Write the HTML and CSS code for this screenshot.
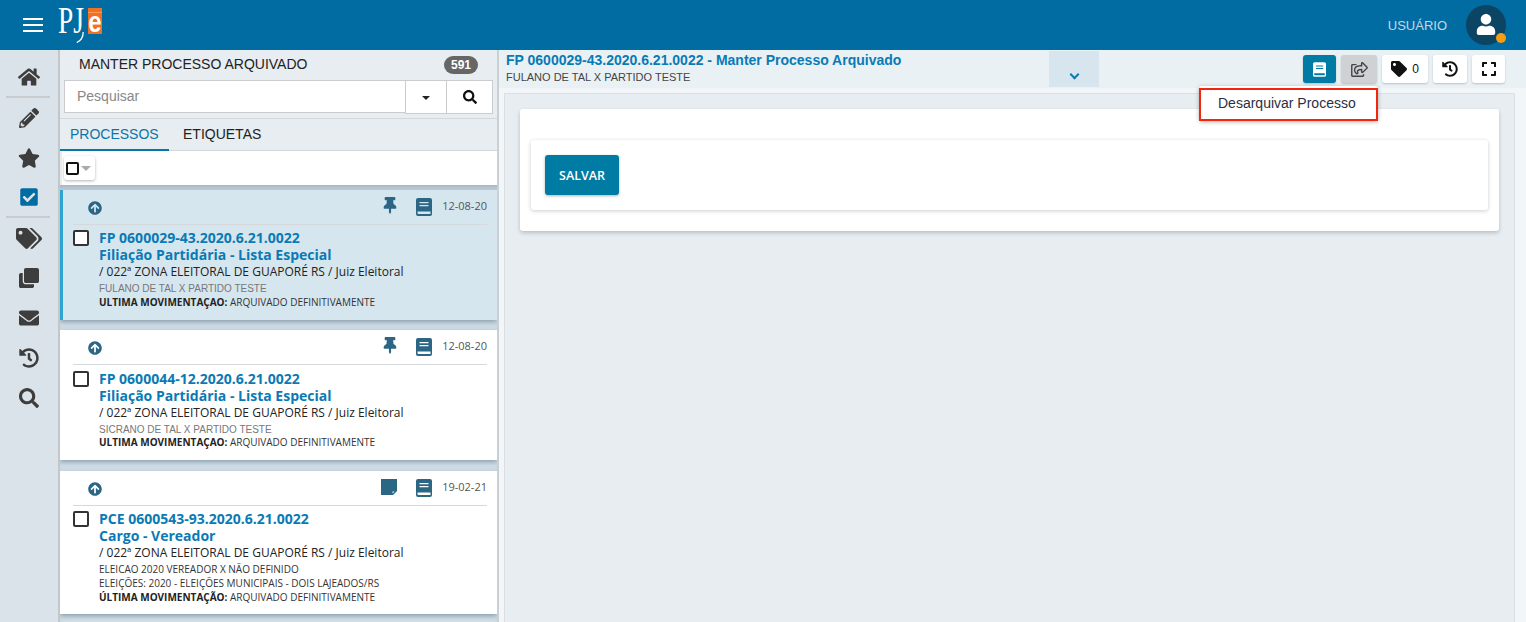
FILE: index.html
```html
<!DOCTYPE html>
<html lang="pt-BR">
<head>
    <meta charset="UTF-8">
    <title>PJe - Manter Processo Arquivado</title>
    <link rel="stylesheet" href="styles.css">
</head>
<body>
    <!-- Icon sprite -->
    <svg class="sprite" xmlns="http://www.w3.org/2000/svg">
        <symbol id="i-home" viewBox="0 0 576 512"><path d="M280.37 148.26L96 300.11V464a16 16 0 0 0 16 16l112.06-.29a16 16 0 0 0 15.92-16V368a16 16 0 0 1 16-16h64a16 16 0 0 1 16 16v95.64a16 16 0 0 0 16 16.05L464 480a16 16 0 0 0 16-16V300L295.67 148.26a12.19 12.19 0 0 0-15.3 0zM571.6 251.47L488 182.56V44.05a12 12 0 0 0-12-12h-56a12 12 0 0 0-12 12v72.61L318.47 43a48 48 0 0 0-61 0L4.34 251.47a12 12 0 0 0-1.6 16.9l25.5 31A12 12 0 0 0 45.15 301l235.22-193.74a12.19 12.19 0 0 1 15.3 0L530.9 301a12 12 0 0 0 16.9-1.6l25.5-31a12 12 0 0 0-1.7-16.93z"/></symbol>
        <symbol id="i-pencil" viewBox="0 0 512 512"><path d="M497.9 142.1l-46.1 46.1c-4.7 4.7-12.3 4.7-17 0l-111-111c-4.7-4.7-4.7-12.3 0-17l46.1-46.1c18.7-18.7 49.1-18.7 67.9 0l60.1 60.1c18.8 18.7 18.8 49.1 0 67.9zM284.2 99.8L21.6 362.4.4 483.9c-2.9 16.4 11.4 30.6 27.8 27.8l121.5-21.3 262.6-262.6c4.7-4.7 4.7-12.3 0-17l-111-111c-4.8-4.7-12.4-4.7-17.1 0zM124.1 339.9c-5.5-5.5-5.5-14.3 0-19.8l154-154c5.5-5.5 14.3-5.5 19.8 0s5.5 14.3 0 19.8l-154 154c-5.5 5.5-14.3 5.5-19.8 0zM88 424h48v36.3l-64.5 11.3-31.1-31.1L51.7 376H88v48z"/></symbol>
        <symbol id="i-star" viewBox="0 0 576 512"><path d="M259.3 17.8L194 150.2 47.9 171.5c-26.2 3.8-36.7 36.1-17.7 54.6l105.7 103-25 145.5c-4.5 26.3 23.2 46 46.4 33.7L288 439.6l130.7 68.7c23.2 12.2 50.9-7.4 46.4-33.7l-25-145.5 105.7-103c19-18.5 8.5-50.8-17.7-54.6L382 150.2 316.7 17.8c-11.7-23.6-45.6-23.9-57.4 0z"/></symbol>
        <symbol id="i-check" viewBox="0 0 448 512"><path d="M400 480H48c-26.51 0-48-21.49-48-48V80c0-26.51 21.49-48 48-48h352c26.51 0 48 21.49 48 48v352c0 26.51-21.49 48-48 48zm-204.686-98.059l184-184c6.248-6.248 6.248-16.379 0-22.627l-22.627-22.627c-6.248-6.248-16.379-6.249-22.628 0L184 302.745l-70.059-70.059c-6.248-6.248-16.379-6.248-22.628 0l-22.627 22.627c-6.248 6.248-6.248 16.379 0 22.627l104 104c6.249 6.25 16.379 6.25 22.628.001z"/></symbol>
        <symbol id="i-tags" viewBox="0 0 640 512"><path d="M497.941 225.941L286.059 14.059A48 48 0 0 0 252.118 0H48C21.49 0 0 21.49 0 48v204.118a48 48 0 0 0 14.059 33.941l211.882 211.882c18.744 18.745 49.136 18.746 67.882 0l204.118-204.118c18.745-18.745 18.745-49.137 0-67.882zM112 160c-26.51 0-48-21.49-48-48s21.49-48 48-48 48 21.49 48 48-21.49 48-48 48zm513.941 133.823L421.823 497.941c-18.745 18.745-49.137 18.745-67.882 0l-.36-.36L527.64 323.522c16.999-16.999 26.36-39.6 26.36-63.64s-9.362-46.641-26.36-63.64L331.397 0h48.721a48 48 0 0 1 33.941 14.059l211.882 211.882c18.745 18.745 18.745 49.137 0 67.882z"/></symbol>
        <symbol id="i-tag" viewBox="0 0 512 512"><path d="M497.941 225.941L286.059 14.059A48 48 0 0 0 252.118 0H48C21.49 0 0 21.49 0 48v204.118a48 48 0 0 0 14.059 33.941l211.882 211.882c18.744 18.745 49.136 18.746 67.882 0l204.118-204.118c18.745-18.745 18.745-49.137 0-67.882zM112 160c-26.51 0-48-21.49-48-48s21.49-48 48-48 48 21.49 48 48-21.49 48-48 48z"/></symbol>
        <symbol id="i-clone" viewBox="0 0 512 512"><path d="M464 0c26.51 0 48 21.49 48 48v288c0 26.51-21.49 48-48 48H176c-26.51 0-48-21.49-48-48V48c0-26.51 21.49-48 48-48h288M176 416c-44.112 0-80-35.888-80-80V128H48c-26.51 0-48 21.49-48 48v288c0 26.51 21.49 48 48 48h288c26.51 0 48-21.49 48-48v-48H176z"/></symbol>
        <symbol id="i-mail" viewBox="0 0 512 512"><path d="M502.3 190.8c3.9-3.1 9.7-.2 9.7 4.7V400c0 26.5-21.5 48-48 48H48c-26.5 0-48-21.5-48-48V195.6c0-5 5.7-7.8 9.7-4.7 22.4 17.4 52.1 39.5 154.1 113.6 21.1 15.4 56.7 47.8 92.2 47.6 35.7.3 72-32.8 92.3-47.6 102-74.1 131.6-96.3 154-113.7zM256 320c23.2.4 56.6-29.2 73.4-41.4 132.7-96.3 142.8-104.7 173.4-128.7 5.8-4.5 9.2-11.5 9.2-18.9v-19c0-26.5-21.5-48-48-48H48C21.5 64 0 85.5 0 112v19c0 7.4 3.4 14.3 9.2 18.9 30.6 23.9 40.7 32.4 173.4 128.7 16.8 12.2 50.2 41.8 73.4 41.4z"/></symbol>
        <symbol id="i-history" viewBox="0 0 512 512"><path d="M504 255.531c.253 136.64-111.18 248.372-247.82 248.468-59.015.042-113.223-20.53-155.822-54.911-11.077-8.94-11.905-25.541-1.839-35.607l11.267-11.267c8.609-8.609 22.353-9.551 31.891-1.984C173.062 425.135 212.781 440 256 440c101.705 0 184-82.311 184-184 0-101.705-82.311-184-184-184-48.814 0-93.149 18.969-126.068 49.932l50.754 50.754c10.08 10.08 2.941 27.314-11.313 27.314H24c-8.837 0-16-7.163-16-16V38.627c0-14.254 17.234-21.393 27.314-11.314l49.372 49.372C129.209 34.136 189.552 8 256 8c136.81 0 247.747 110.78 248 247.531zm-180.912 78.784l9.823-12.63c8.138-10.463 6.253-25.542-4.21-33.679L288 256.349V152c0-13.255-10.745-24-24-24h-16c-13.255 0-24 10.745-24 24v135.651l65.409 50.874c10.463 8.137 25.541 6.253 33.679-4.21z"/></symbol>
        <symbol id="i-search" viewBox="0 0 512 512"><path d="M505 442.7L405.3 343c-4.5-4.5-10.6-7-17-7H372c27.6-35.3 44-79.7 44-128C416 93.1 322.9 0 208 0S0 93.1 0 208s93.1 208 208 208c48.3 0 92.7-16.4 128-44v16.3c0 6.4 2.5 12.5 7 17l99.7 99.7c9.4 9.4 24.6 9.4 33.9 0l28.3-28.3c9.4-9.4 9.4-24.6.1-34zM208 336c-70.7 0-128-57.2-128-128 0-70.7 57.2-128 128-128 70.7 0 128 57.2 128 128 0 70.7-57.2 128-128 128z"/></symbol>
        <symbol id="i-pin" viewBox="0 0 384 512"><path d="M298.028 214.267L285.793 96H328c13.255 0 24-10.745 24-24V24c0-13.255-10.745-24-24-24H56C42.745 0 32 10.745 32 24v48c0 13.255 10.745 24 24 24h42.207L85.972 214.267C37.465 236.82 0 277.261 0 328c0 13.255 10.745 24 24 24h136v104.007c0 1.242.289 2.467.845 3.578l24 48c2.941 5.882 11.364 5.893 14.311 0l24-48a8.008 8.008 0 0 0 .845-3.578V352h136c13.255 0 24-10.745 24-24-.001-51.183-37.983-91.42-85.973-113.733z"/></symbol>
        <symbol id="i-book" viewBox="0 0 16 18"><path fill-rule="evenodd" d="M2 0h12a2 2 0 0 1 2 2v14a2 2 0 0 1-2 2H2a2 2 0 0 1-2-2V2a2 2 0 0 1 2-2zM3.500 4v1.300h9V4zM3.500 7v1.300h9V7zM1.500 13.500v1.600a1 1 0 0 0 1 1H14.500v-2.600z"/></symbol>
        <symbol id="i-note" viewBox="0 0 16 16"><path fill-rule="evenodd" d="M0 0h16v12l-4 4H0zM11.500 12.500v2l2-2z"/></symbol>
        <symbol id="i-up" viewBox="0 0 512 512"><path d="M8 256C8 119 119 8 256 8s248 111 248 248-111 248-248 248S8 393 8 256zm143.6 28.900l72.400-75.500V392c0 13.300 10.700 24 24 24h16c13.300 0 24-10.700 24-24V209.400l72.400 75.500c9.300 9.700 24.800 9.900 34.300.4l10.900-11c9.400-9.400 9.400-24.600 0-33.900L273 107.700c-9.400-9.400-24.600-9.400-33.900 0L106.300 240.400c-9.400 9.400-9.400 24.600 0 33.900l10.900 11c9.600 9.500 25.100 9.300 34.400-.4z"/></symbol>
        <symbol id="i-user" viewBox="0 0 448 512"><path d="M224 256c70.700 0 128-57.300 128-128S294.700 0 224 0 96 57.300 96 128s57.300 128 128 128zm89.600 32h-16.700c-22.200 10.200-46.900 16-72.900 16s-50.600-5.800-72.900-16h-16.700C60.200 288 0 348.200 0 422.400V464c0 26.500 21.500 48 48 48h352c26.500 0 48-21.500 48-48v-41.600c0-74.200-60.200-134.400-134.400-134.400z"/></symbol>
        <symbol id="i-share" viewBox="0 0 576 512"><path d="M561.938 158.060L417.940 14.092C387.926-15.922 336 5.097 336 48.032v57.198c-42.450 1.880-84.030 6.550-120.760 17.990-35.170 10.950-63.070 27.580-82.910 49.420C108.220 199.200 96 232.600 96 271.940c0 61.697 33.178 112.455 84.870 144.760 37.546 23.508 85.248-12.651 71.020-55.740-15.515-47.119-17.156-70.923 84.110-78.760V336c0 42.993 51.968 63.913 81.940 33.940l143.998-144c18.750-18.740 18.750-49.140 0-67.880zM384 336V232.160C255.309 234.082 166.492 255.350 206.310 376 176.790 357.550 144 324.080 144 271.940c0-109.334 129.140-118.947 240-119.850V48l144 144-144 144zm24.740 84.493a82.658 82.658 0 0 0 20.974-9.303c7.976-4.952 18.286.826 18.286 10.214V464c0 26.510-21.490 48-48 48H48c-26.510 0-48-21.490-48-48V112c0-26.510 21.490-48 48-48h132c6.627 0 12 5.373 12 12v4.486c0 4.917-2.987 9.369-7.569 11.152-13.702 5.331-26.396 11.537-38.050 18.585a12.138 12.138 0 0 1-6.280 1.777H54a6 6 0 0 0-6 6v340a6 6 0 0 0 6 6h340a6 6 0 0 0 6-6v-25.966c0-5.370 3.579-10.059 8.740-11.541z"/></symbol>
        <symbol id="i-expand" viewBox="0 0 448 512"><path d="M0 180V56c0-13.300 10.700-24 24-24h124c6.600 0 12 5.400 12 12v40c0 6.600-5.400 12-12 12H64v84c0 6.600-5.400 12-12 12H12c-6.600 0-12-5.400-12-12zM288 44v40c0 6.600 5.400 12 12 12h84v84c0 6.600 5.400 12 12 12h40c6.600 0 12-5.400 12-12V56c0-13.300-10.700-24-24-24H300c-6.600 0-12 5.400-12 12zm148 276h-40c-6.600 0-12 5.400-12 12v84h-84c-6.600 0-12 5.400-12 12v40c0 6.600 5.400 12 12 12h124c13.300 0 24-10.700 24-24V332c0-6.600-5.400-12-12-12zM160 468v-40c0-6.600-5.400-12-12-12H64v-84c0-6.600-5.400-12-12-12H12c-6.600 0-12 5.400-12 12v124c0 13.300 10.700 24 24 24h124c6.600 0 12-5.400 12-12z"/></symbol>
    </svg>

    <!-- Top bar -->
    <header class="topbar">
        <div class="hamburger"><span></span><span></span><span></span></div>
        <div class="logo">
            <span class="logo-pj">PJ</span>
            <svg class="logo-tail" viewBox="0 0 8 12"><path d="M7.500 0C7.500 5 5 9.500.5 11.500" fill="none" stroke="#fff" stroke-width="1.400"/></svg>
            <span class="logo-e"><span class="logo-e-glyph">e</span></span>
        </div>
        <div class="user-area">
            <span class="user-name">USUÁRIO</span>
            <div class="avatar">
                <svg class="avatar-icon"><use href="#i-user"/></svg>
                <span class="avatar-dot"></span>
            </div>
        </div>
    </header>

    <div class="workspace">
        <!-- Side menu -->
        <nav class="sidenav">
            <div class="nav-item nav-item-short"><svg class="nav-icon"><use href="#i-home"/></svg></div>
            <div class="nav-sep"></div>
            <div class="nav-item"><svg class="nav-icon"><use href="#i-pencil"/></svg></div>
            <div class="nav-item"><svg class="nav-icon"><use href="#i-star"/></svg></div>
            <div class="nav-item nav-item-short nav-active"><svg class="nav-icon"><use href="#i-check"/></svg></div>
            <div class="nav-sep"></div>
            <div class="nav-item"><svg class="nav-icon nav-icon-wide"><use href="#i-tags"/></svg></div>
            <div class="nav-item"><svg class="nav-icon"><use href="#i-clone"/></svg></div>
            <div class="nav-item"><svg class="nav-icon"><use href="#i-mail"/></svg></div>
            <div class="nav-item"><svg class="nav-icon"><use href="#i-history"/></svg></div>
            <div class="nav-item"><svg class="nav-icon"><use href="#i-search"/></svg></div>
        </nav>

        <!-- Process list -->
        <section class="list-col">
            <div class="list-head">
                <span class="list-title">MANTER PROCESSO ARQUIVADO</span>
                <span class="badge">591</span>
            </div>
            <div class="search-row">
                <div class="search-input">Pesquisar</div>
                <div class="search-btn search-caret"><span class="caret"></span></div>
                <div class="search-btn search-go"><svg class="search-icon"><use href="#i-search"/></svg></div>
            </div>
            <div class="tabs">
                <div class="tab tab-active">PROCESSOS</div>
                <div class="tab">ETIQUETAS</div>
            </div>
            <div class="select-row">
                <div class="select-box"><span class="select-check"></span><span class="select-caret"></span></div>
            </div>
            <div class="cards">
                <article class="card card-active">
                    <div class="card-top">
                        <svg class="up-icon"><use href="#i-up"/></svg>
                        <svg class="card-icon pin-icon"><use href="#i-pin"/></svg>
                        <svg class="card-icon book-icon"><use href="#i-book"/></svg>
                        <span class="card-date">12-08-20</span>
                    </div>
                    <div class="card-body">
                        <span class="card-check"></span>
                        <div class="card-text">
                            <div class="card-num">FP 0600029-43.2020.6.21.0022</div>
                            <div class="card-class">Filiação Partidária - Lista Especial</div>
                            <div class="card-org">/ 022ª ZONA ELEITORAL DE GUAPORÉ RS / Juiz Eleitoral</div>
                            <div class="card-parts card-parts-grey">FULANO DE TAL X PARTIDO TESTE</div>
                            <div class="card-last"><b>ULTIMA MOVIMENTAÇAO:</b> ARQUIVADO DEFINITIVAMENTE</div>
                        </div>
                    </div>
                </article>
                <article class="card">
                    <div class="card-top">
                        <svg class="up-icon"><use href="#i-up"/></svg>
                        <svg class="card-icon pin-icon"><use href="#i-pin"/></svg>
                        <svg class="card-icon book-icon"><use href="#i-book"/></svg>
                        <span class="card-date">12-08-20</span>
                    </div>
                    <div class="card-body">
                        <span class="card-check"></span>
                        <div class="card-text">
                            <div class="card-num">FP 0600044-12.2020.6.21.0022</div>
                            <div class="card-class">Filiação Partidária - Lista Especial</div>
                            <div class="card-org">/ 022ª ZONA ELEITORAL DE GUAPORÉ RS / Juiz Eleitoral</div>
                            <div class="card-parts card-parts-grey">SICRANO DE TAL X PARTIDO TESTE</div>
                            <div class="card-last"><b>ULTIMA MOVIMENTAÇAO:</b> ARQUIVADO DEFINITIVAMENTE</div>
                        </div>
                    </div>
                </article>
                <article class="card">
                    <div class="card-top">
                        <svg class="up-icon"><use href="#i-up"/></svg>
                        <svg class="card-icon note-icon"><use href="#i-note"/></svg>
                        <svg class="card-icon book-icon"><use href="#i-book"/></svg>
                        <span class="card-date">19-02-21</span>
                    </div>
                    <div class="card-body">
                        <span class="card-check"></span>
                        <div class="card-text">
                            <div class="card-num">PCE 0600543-93.2020.6.21.0022</div>
                            <div class="card-class">Cargo - Vereador</div>
                            <div class="card-org">/ 022ª ZONA ELEITORAL DE GUAPORÉ RS / Juiz Eleitoral</div>
                            <div class="card-parts">ELEICAO 2020 VEREADOR X NÃO DEFINIDO</div>
                            <div class="card-parts">ELEIÇÕES: 2020 - ELEIÇÕES MUNICIPAIS - DOIS LAJEADOS/RS</div>
                            <div class="card-last"><b>ÚLTIMA MOVIMENTAÇÃO:</b> ARQUIVADO DEFINITIVAMENTE</div>
                        </div>
                    </div>
                </article>
            </div>
        </section>

        <!-- Process detail -->
        <main class="detail">
            <div class="detail-head">
                <div class="detail-titles">
                    <div class="detail-title">FP 0600029-43.2020.6.21.0022 - Manter Processo Arquivado</div>
                    <div class="detail-sub">FULANO DE TAL X PARTIDO TESTE</div>
                </div>
                <div class="detail-toggle"><span class="chevron"></span></div>
                <div class="toolbar">
                    <div class="tool tool-primary"><svg class="tool-icon"><use href="#i-book"/></svg></div>
                    <div class="tool tool-open"><svg class="tool-icon tool-icon-share"><use href="#i-share"/></svg></div>
                    <div class="tool tool-tag"><svg class="tool-icon"><use href="#i-tag"/></svg><span>0</span></div>
                    <div class="tool tool-history"><svg class="tool-icon"><use href="#i-history"/></svg></div>
                    <div class="tool"><svg class="tool-icon"><use href="#i-expand"/></svg></div>
                </div>
                <div class="tool-menu"><div class="tool-menu-item">Desarquivar Processo</div></div>
            </div>
            <div class="detail-pane">
                <div class="panel">
                    <div class="panel-inner">
                        <button class="btn-save">SALVAR</button>
                    </div>
                </div>
            </div>
        </main>
    </div>
</body>
</html>
```

FILE: styles.css
```css
/* General */
* {
    box-sizing: border-box;
}

html, body {
    margin: 0;
    padding: 0;
    height: 100%;
    overflow: hidden;
}

body {
    display: flex;
    flex-direction: column;
    font-family: "Liberation Sans", Arial, sans-serif;
    color: #333;
    background: #f3f6f8;
}

.sprite {
    display: none;
}

/* Top bar */
.topbar {
    flex: 0 0 50px;
    display: flex;
    align-items: center;
    background: #016ca2;
    padding: 0 20px 0 23px;
}

.hamburger {
    display: flex;
    flex-direction: column;
    gap: 4px;
    width: 20px;
    margin-right: 15px;
}

.hamburger span {
    height: 2px;
    background: #fff;
}

.logo {
    position: relative;
    display: flex;
    align-items: flex-start;
    width: 44px;
    height: 36px;
    margin-top: 2px;
}

.logo-pj {
    flex: 0 0 30px;
    min-width: 0;
    font-family: "Liberation Serif", serif;
    font-size: 38px;
    line-height: 24px;
    color: #fff;
    transform: scaleX(.72);
    transform-origin: left top;
    white-space: nowrap;
}

.logo-tail {
    position: absolute;
    left: 18px;
    top: 24px;
    width: 8px;
    height: 11px;
}

.logo-e {
    flex: 0 0 14px;
    display: flex;
    align-items: flex-end;
    justify-content: center;
    height: 26px;
    background: repeating-linear-gradient(0deg, #f36f21 0 4px, #f79a5c 4px 5px) top / 100% 9px no-repeat, #f36f21;
}

.logo-e-glyph {
    display: block;
    color: #fff;
    font-weight: bold;
    font-size: 24px;
    line-height: 20px;
    transform: scaleY(1.2);
    transform-origin: 50% 18px;
}

.user-area {
    margin-left: auto;
    display: flex;
    align-items: center;
    gap: 19px;
}

.user-name {
    font-size: 13px;
    color: #c3d8e6;
}

.avatar {
    position: relative;
    width: 40px;
    height: 40px;
    border-radius: 50%;
    background: #0c4464;
    display: flex;
    align-items: center;
    justify-content: center;
}

.avatar-icon {
    width: 20px;
    height: 21px;
    fill: #fff;
    margin-top: -2px;
}

.avatar-dot {
    position: absolute;
    right: 0;
    bottom: 2px;
    width: 10px;
    height: 10px;
    border-radius: 50%;
    background: #f99c10;
}

.workspace {
    flex: 1;
    display: flex;
    min-height: 0;
}

/* Side menu */
.sidenav {
    flex: 0 0 60px;
    padding: 8px 0 0;
    background: #dbe3ea;
    border-right: 2px solid #c3c7ca;
}

.nav-item {
    height: 40px;
    display: flex;
    align-items: center;
    justify-content: center;
}

.nav-item-short {
    height: 38px;
}

.nav-sep {
    height: 2px;
    margin: 0 8px 0 6px;
    background: #c8cccf;
}

.nav-icon {
    width: 22px;
    height: 20px;
    fill: #3d3d3d;
}

.nav-icon-wide {
    width: 26px;
    height: 21px;
}

.nav-active .nav-icon {
    fill: #016ca2;
}

/* Process list */
.list-col {
    flex: 0 0 439px;
    display: flex;
    flex-direction: column;
    background: #e7edf1;
    border-right: 2px solid #c9d0d5;
}

.list-head {
    flex: 0 0 30px;
    display: flex;
    align-items: center;
    justify-content: space-between;
    padding: 0 19px 2px 19px;
}

.list-title {
    font-size: 14px;
    color: #222;
}

.badge {
    width: 34px;
    height: 18px;
    margin-top: 2px;
    border-radius: 9px;
    background: #666;
    color: #fff;
    font-size: 12px;
    font-weight: bold;
    line-height: 18px;
    text-align: center;
}

.search-row {
    display: flex;
    height: 34px;
    margin: 0 4px;
}

.search-input {
    flex: 1;
    height: 33px;
    padding-left: 12px;
    background: #fff;
    border: 1px solid #ccc;
    border-right: 0;
    font-size: 14px;
    line-height: 31px;
    color: #888;
}

.search-btn {
    display: flex;
    align-items: center;
    justify-content: center;
    background: #fff;
    border: 1px solid #ccc;
}

.search-caret {
    width: 41px;
    border-right: 0;
}

.search-go {
    width: 47px;
}

.caret {
    width: 0;
    height: 0;
    margin-top: 2px;
    border-left: 4px solid transparent;
    border-right: 4px solid transparent;
    border-top: 4px solid #222;
}

.search-icon {
    width: 14px;
    height: 14px;
    fill: #111;
}

.tabs {
    flex: 0 0 33px;
    min-height: 0;
    display: flex;
    align-items: flex-start;
    margin-top: 4px;
    border-top: 1px solid #d2d8dc;
    border-bottom: 1px solid #d2d8dc;
}

.tab {
    height: 31px;
    padding: 7px 10px 0 13px;
    font-size: 14px;
    color: #222;
}

.tab-active {
    width: 109px;
    height: 32px;
    margin-bottom: -1px;
    padding-left: 10px;
    margin-right: 1px;
    color: #0a76a8;
    border-bottom: 2px solid #0a76a8;
}

.select-row {
    flex: 0 0 34px;
    margin-left: 2px;
    padding: 5px 0 0 2px;
    background: #fff;
}

.select-box {
    display: flex;
    align-items: center;
    gap: 2px;
    width: 31px;
    height: 24px;
    padding-left: 2px;
    background: #fff;
    border-radius: 3px;
    box-shadow: 0 1px 3px rgba(0, 0, 0, .3);
}

.select-check {
    width: 13px;
    height: 13px;
    border: 2px solid #111;
    border-radius: 2px;
}

.select-caret {
    width: 0;
    height: 0;
    border-left: 5px solid transparent;
    border-right: 5px solid transparent;
    border-top: 5px solid #aaa;
}

/* Cards */
.cards {
    flex: 1;
    display: flex;
    flex-direction: column;
    gap: 10px;
    padding: 5px 0 0;
    background: #d3dfe7;
    overflow: hidden;
    box-shadow: inset 0 6px 5px -3px rgba(90, 115, 135, .4);
}

.card {
    flex: none;
    padding: 0 10px 0 13px;
    background: #fff;
    box-shadow: 0 2px 5px rgba(60, 90, 115, .5);
}

.card:last-child {
    margin-top: 1px;
}

.card-active {
    padding-left: 10px;
    background: #d6e6ee;
    border-left: 3px solid #2fa4cf;
}

.card-top {
    display: flex;
    align-items: center;
    height: 35px;
    border-bottom: 1px solid #d5d9dc;
    padding: 0 0 0 15px;
}

.up-icon {
    width: 14px;
    height: 14px;
    margin-top: 1px;
    fill: #2b6685;
    margin-right: auto;
}

.card-icon {
    fill: #2b6685;
}

.pin-icon {
    width: 14px;
    height: 17px;
    margin-top: -3px;
    margin-right: 19px;
}

.note-icon {
    width: 16px;
    height: 16px;
    margin-top: -2px;
    margin-right: 19px;
}

.book-icon {
    width: 16px;
    height: 18px;
    margin-top: -1px;
    margin-right: 10px;
}

.card-date {
    font-family: "Open Sans", sans-serif;
    font-size: 11px;
    color: #555;
    margin-top: -3px;
}

.card-body {
    display: flex;
    padding: 4px 0 10px;
}

/* the second card sits a pixel lower under its divider */
.card:nth-child(2) .card-body {
    padding-top: 5px;
}

.card:nth-child(2) .card-last {
    margin-top: -1px;
}

.card-check {
    flex: none;
    width: 16px;
    height: 16px;
    margin: 1px 10px 0 0;
    border: 2px solid #333;
    border-radius: 2px;
    background: #fff;
}

.card-text {
    font-family: "Open Sans", sans-serif;
    font-size: 10px;
    color: #333;
}

.card-num,
.card-class {
    font-size: 14px;
    font-weight: 700;
    line-height: 17px;
    color: #0a7ab5;
}

.card-org {
    font-size: 12px;
    line-height: 17px;
    color: #222;
}

.card-parts {
    font-size: 10px;
    line-height: 14px;
    margin-top: 1px;
}

.card-parts + .card-parts {
    margin-top: 0;
}

.card-parts-grey {
    font-family: "Liberation Sans", sans-serif;
    line-height: 13px;
    margin-top: 2px;
    color: #777;
}

.card-last {
    font-size: 10px;
    line-height: 14px;
}

.card-parts-grey + .card-last {
    margin-bottom: 1px;
}

.card-last b {
    color: #222;
}

/* Detail */
.detail {
    flex: 1;
    min-width: 0;
    display: flex;
    flex-direction: column;
}

.detail-head {
    position: relative;
    flex: 0 0 38px;
    display: flex;
    align-items: flex-start;
    background: #e9f1f5;
    padding: 0 0 0 7px;
}

.detail-titles {
    flex: 0 0 543px;
    padding-top: 2px;
}

.detail-title {
    font-size: 14px;
    font-weight: bold;
    line-height: 17px;
    color: #0a7ab5;
}

.detail-sub {
    font-size: 11px;
    line-height: 17px;
    color: #444;
}

.detail-toggle {
    flex: 0 0 50px;
    height: 36px;
    margin-top: 1px;
    background: #d7e6ee;
    display: flex;
    justify-content: center;
}

.chevron {
    width: 7px;
    height: 7px;
    margin-top: 20px;
    border-right: 2px solid #0a7ab5;
    border-bottom: 2px solid #0a7ab5;
    transform: rotate(45deg);
}

.toolbar {
    margin-left: auto;
    margin-right: 21px;
    margin-top: 5px;
    display: flex;
    gap: 5px;
}

.tool {
    width: 33px;
    height: 28px;
    display: flex;
    align-items: center;
    justify-content: center;
    gap: 5px;
    background: #fff;
    border-radius: 3px;
    box-shadow: 0 1px 2px rgba(0, 0, 0, .2);
    font-size: 12px;
    color: #111;
}

.tool-primary {
    background: #007ba3;
}

.tool-primary .tool-icon {
    fill: #fff;
    width: 13px;
    height: 15px;
}

.tool-open {
    width: 36px;
    background: #cfd2d4;
}

.tool-tag {
    width: 46px;
}

.tool-history {
    width: 34px;
}

.tool-icon {
    width: 16px;
    height: 16px;
    fill: #111;
}

.tool-icon-share {
    width: 17px;
    height: 15px;
    fill: #444;
}

/* Menu over the toolbar */
.tool-menu {
    position: absolute;
    top: 36px;
    right: 148px;
    width: 179px;
    padding-top: 2px;
    background: #fff;
    border-radius: 3px;
    box-shadow: 0 1px 4px rgba(0, 0, 0, .3);
}

.tool-menu-item {
    height: 33px;
    padding-left: 17px;
    border: 2px solid #f0260d;
    font-size: 14px;
    line-height: 26px;
    color: #2a2f45;
}

.detail-pane {
    flex: 1;
    margin: 5px 11px 0 5px;
    padding: 15px 15px 0;
    background: #e7edf1;
    border: 1px solid #dcdfe1;
    border-bottom: 0;
}

.panel {
    height: 122px;
    padding: 31px 11px 0;
    background: #fff;
    border-radius: 3px;
    box-shadow: 0 2px 4px rgba(0, 0, 0, .2);
}

.panel-inner {
    height: 70px;
    padding: 15px 14px;
    background: #fff;
    border-radius: 3px;
    box-shadow: 0 1px 4px rgba(0, 0, 0, .2);
}

.btn-save {
    display: block;
    width: 74px;
    height: 40px;
    padding: 0;
    border: 0;
    border-radius: 3px;
    background: #007ba3;
    box-shadow: 0 1px 3px rgba(0, 0, 0, .3);
    color: #fff;
    font-family: "Open Sans", sans-serif;
    font-size: 12.5px;
    font-weight: 600;
}
```
